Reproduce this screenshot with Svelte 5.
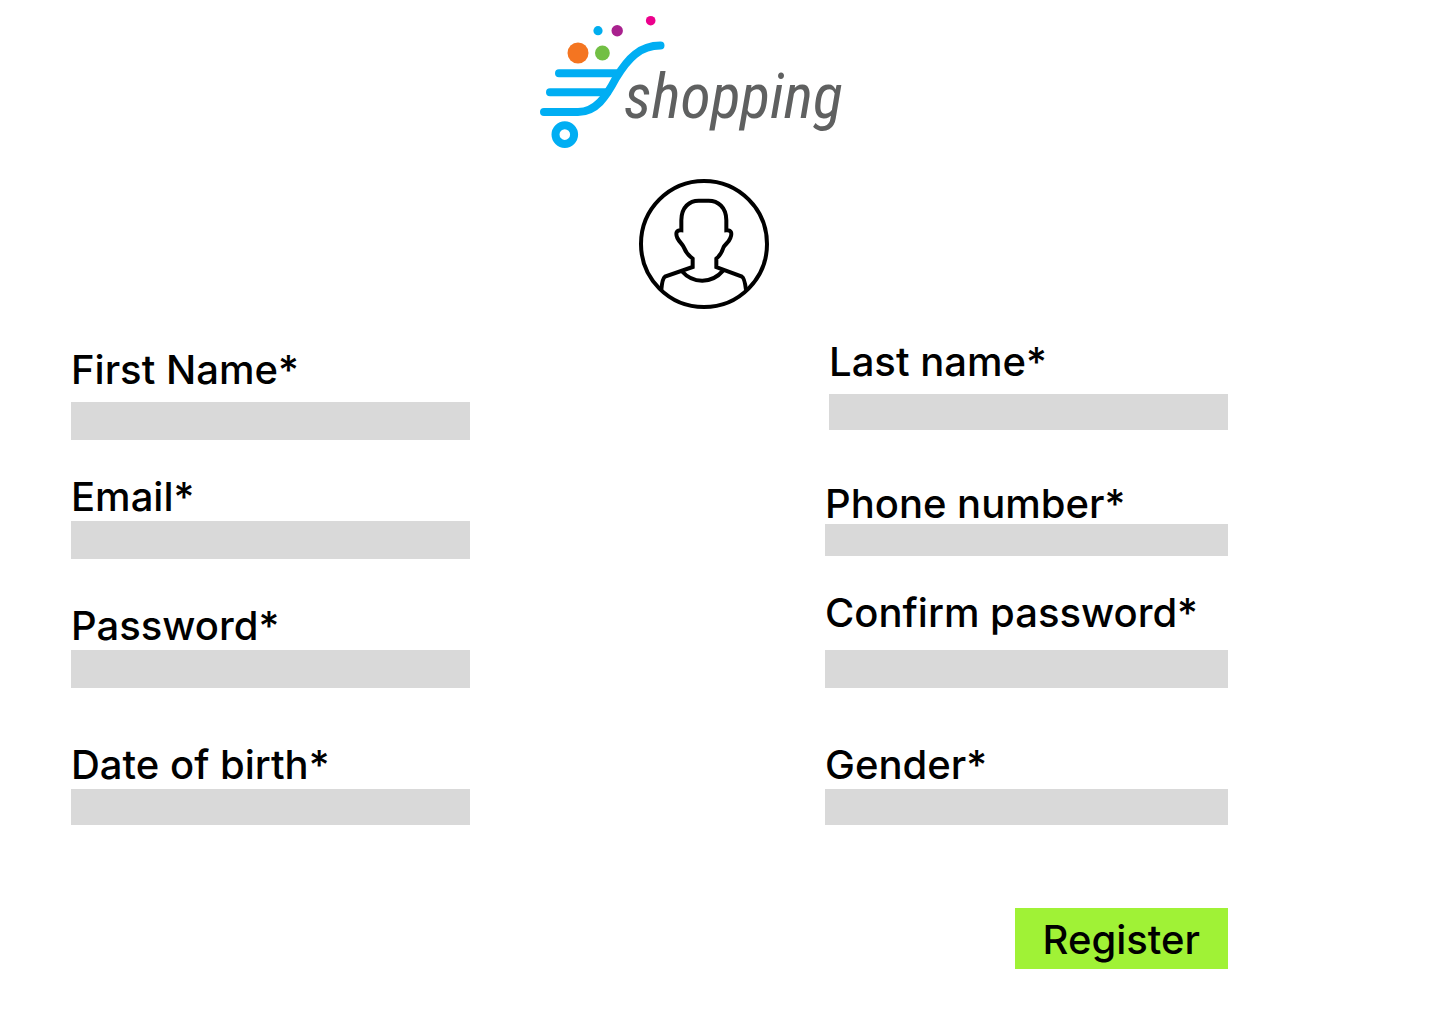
<script lang="ts">
  type Field = {
    id: string;
    label: string;
    kind: string;
    layout: string;
  };

  const columns: Field[][] = [
    [
      { id: 'first-name', label: 'First Name*', kind: 'text', layout: 'spaced' },
      { id: 'email', label: 'Email*', kind: 'email', layout: 'after-sm' },
      { id: 'password', label: 'Password*', kind: 'password', layout: 'after-md' },
      { id: 'birth', label: 'Date of birth*', kind: 'text', layout: 'after-xl short' }
    ],
    [
      { id: 'last-name', label: 'Last name*', kind: 'text', layout: 'spaced short narrow' },
      { id: 'phone', label: 'Phone number*', kind: 'tel', layout: 'after-lg tight' },
      { id: 'confirm', label: 'Confirm password*', kind: 'password', layout: 'after-sm loose' },
      { id: 'gender', label: 'Gender*', kind: 'select', layout: 'after-xl short' }
    ]
  ];
</script>

<main>
  <header>
    <svg class="logo" viewBox="540 16 328 132" role="img" aria-label="shopping">
      <g fill="none" stroke="#00aef3" stroke-width="8" stroke-linecap="round">
        <path d="M559 73.3H617M550 92.2H607" />
        <path d="M544 112H578C596 112 606 97 616 78C628 58 640 45.6 660.5 45.6" />
        <circle cx="564.8" cy="134.6" r="9.3" />
      </g>
      <circle cx="578" cy="53" r="10.5" fill="#f47521" />
      <circle cx="602.4" cy="53" r="7.4" fill="#72bf44" />
      <circle cx="598" cy="30.7" r="4.6" fill="#00aeef" />
      <circle cx="617.2" cy="30.7" r="5.7" fill="#a9218e" />
      <circle cx="650.7" cy="20.7" r="4.8" fill="#ec008c" />
      <text x="624" y="118">shopping</text>
    </svg>

    <svg class="avatar" viewBox="26 26 390 390" fill="none" stroke="#000" stroke-width="12" aria-hidden="true">
      <circle cx="221" cy="221" r="189" />
      <path d="M93 358C95 335 98 323 104 319L187 290V265C176 257 166 246 160 230C157 222 147 215 141 203C135 188 138 179 153 180V150C153 110 178 91 205 91H235C262 91 288 110 288 150V180C303 179 306 188 300 203C295 217 284 222 280 230C275 246 268 257 258 265V290L335 319C341 322 344 335 347 358" />
      <path d="M154 302C188 341 244 341 279 300" />
    </svg>
  </header>

  <form onsubmit={(event) => event.preventDefault()}>
    <div class="columns">
      {#each columns as column}
        <div class="column">
          {#each column as field}
            <div class="field {field.layout}">
              <label for={field.id}>{field.label}</label>
              {#if field.kind === 'select'}
                <select id={field.id} required>
                  <option value=""></option>
                  <option value="female">Female</option>
                  <option value="male">Male</option>
                  <option value="other">Other</option>
                </select>
              {:else}
                <input id={field.id} type={field.kind} required />
              {/if}
            </div>
          {/each}
        </div>
      {/each}
    </div>
    <button type="submit">Register</button>
  </form>
</main>

<style>
  :global(body) {
    background: #fff;
  }

  main {
    color: #000;
    font-family: Inter, 'Liberation Sans', sans-serif;
    padding: 16px 0 48px;
  }

  header {
    display: flex;
    flex-direction: column;
    align-items: center;
    gap: 31px;
    padding-right: 32px;
  }

  .logo {
    width: 328px;
    height: 132px;
    overflow: visible;
  }

  .logo text {
    fill: #5f6060;
    font-family: 'Roboto Condensed', Roboto, sans-serif;
    font-size: 62px;
    font-style: italic;
  }

  .avatar {
    width: 130px;
    height: 130px;
  }

  form {
    display: flex;
    flex-direction: column;
    gap: 83px;
    padding: 33px 212px 0 71px;
  }

  .columns {
    display: grid;
    grid-template-columns: 399fr 403fr;
    column-gap: 355px;
  }

  .column {
    display: flex;
    flex-direction: column;
  }

  .column:first-child {
    padding-top: 8px;
  }

  .field {
    display: flex;
    flex-direction: column;
    gap: 4px;
  }

  .spaced {
    gap: 12px;
  }

  .loose {
    gap: 17px;
  }

  .tight {
    gap: 0;
  }

  .narrow {
    width: 99%;
    align-self: flex-end;
  }

  .after-sm {
    margin-top: 37px;
  }

  .after-md {
    margin-top: 47px;
  }

  .after-lg {
    margin-top: 54px;
  }

  .after-xl {
    margin-top: 57px;
  }

  label,
  button {
    font-size: 40px;
    font-weight: 500;
    line-height: 40px;
  }

  input,
  select {
    appearance: none;
    box-sizing: border-box;
    width: 100%;
    height: 38px;
    margin: 0;
    padding: 0 12px;
    border: 0;
    border-radius: 0;
    background: #d9d9d9;
    color: #000;
    font-family: inherit;
    font-size: 24px;
  }

  .short input,
  .short select {
    height: 36px;
  }

  .tight input {
    height: 32px;
  }

  button {
    align-self: flex-end;
    padding: 12px 28px 9px;
    border: 0;
    background: #a0f236;
    color: #000;
    font-family: inherit;
    cursor: pointer;
  }
</style>
